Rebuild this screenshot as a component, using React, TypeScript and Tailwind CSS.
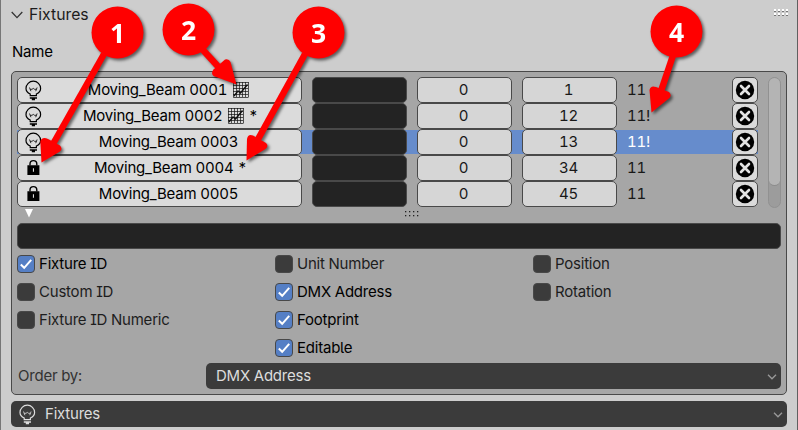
import React from "react";

const names = [
  { name: "Moving_Beam 0001", graph: true, star: false, locked: false, id: "1", fp: "11" },
  { name: "Moving_Beam 0002", graph: true, star: true, locked: false, id: "12", fp: "11!" },
  { name: "Moving_Beam 0003", graph: false, star: false, locked: false, id: "13", fp: "11!", selected: true },
  { name: "Moving_Beam 0004", graph: false, star: true, locked: true, id: "34", fp: "11" },
  { name: "Moving_Beam 0005", graph: false, star: false, locked: true, id: "45", fp: "11" },
];

const columns = [
  [
    { label: "Fixture ID", on: true },
    { label: "Custom ID", on: false },
    { label: "Fixture ID Numeric", on: false },
  ],
  [
    { label: "Unit Number", on: false },
    { label: "DMX Address", on: true },
    { label: "Footprint", on: true },
    { label: "Editable", on: true },
  ],
  [
    { label: "Position", on: false },
    { label: "Rotation", on: false },
  ],
];

function Bulb() {
  return (
    <svg width="18" height="22" viewBox="0 0 18 22" fill="none" stroke="currentColor" className="shrink-0">
      <path d="M5.2 16.6V15C2.500 13.800 1 12 1 9.500a7.300 7.300 0 0 1 14.600 0c0 2.500-1.500 4.300-4.200 5.500v1.600z" strokeWidth="1.2" />
      <path d="M4.500 8.500l1.400 3.700M5.200 10.300h1.800l1.300-.9 1.300.9h1.800M12.100 8.500l-1.400 3.700" strokeWidth="0.8" />
      <path d="M4.800 19h7.200M6.800 20.500h3.200" strokeWidth="1.5" />
    </svg>
  );
}

function Lock() {
  return (
    <svg width="18" height="22" viewBox="0 0 18 22" className="shrink-0">
      <path d="M5 8.500V7a3.400 3.400 0 0 1 6.800 0v1.500" fill="none" stroke="#000" strokeWidth="1.4" />
      <path fill="#000" fillRule="evenodd" d="M2.400 8.200h12v9.800h-12zM7.900 11.300v3.400h1.100v-3.400z" />
    </svg>
  );
}

function Graph() {
  return (
    <svg width="16" height="16" viewBox="0 0 16 16" fill="none" stroke="#111" className="ml-[6px] shrink-0">
      <path d="M.5 0v15.500H15.500M3.500 0v15M6.500 0v15M9.500 0v15M12.500 0v15M15.500 0v15M0 .5h15.500M0 3.500h15M0 6.500h15M0 9.500h15M0 12.500h15" strokeWidth=".7" />
      <path d="M1 14l4-5 2.500 2L14.500 2.500" strokeWidth="1.400" />
    </svg>
  );
}

function Chevron({ className }: { className: string }) {
  return (
    <svg width="10" height="6" viewBox="0 0 10 6" fill="none" stroke="currentColor" className={className}>
      <path d="M1 .8l4 4 4-4" strokeWidth="1.3" />
    </svg>
  );
}

function Callouts() {
  const items = [
    { n: "1", cx: 117.5, cy: 32.5, line: "M104 54L53 144", head: "M41.5 162.5L40.3 141Q42.5 136 48 139L60 145.5Q63 149 60 151.5Z" },
    { n: "2", cx: 188.5, cy: 29.5, line: "M203 50L224 73", head: "M236.500 84.500L213.500 76Q210.500 73 213.500 69.500L225 59.500Q229 58.500 230.500 62Z" },
    { n: "3", cx: 318.5, cy: 32.5, line: "M305 54L257 141", head: "M246.500 160.500L247 139Q248 133.500 253 135.500L266 143Q269 146 265.500 149Z" },
    { n: "4", cx: 676.5, cy: 31.5, line: "M673.500 54L660 94", head: "M651.500 112.500L649.500 90Q650.500 85 656 87L669 92Q672 95 669.500 98Z" },
  ];
  return (
    <svg width="798" height="430" className="pointer-events-none absolute -left-px top-0 [filter:drop-shadow(2px_2px_1.5px_rgba(0,0,0,0.55))]">
      {items.map((c) => (
        <g key={c.n} fill="#f00">
          <path d={c.line} stroke="#f00" strokeWidth="6.5" />
          <path d={c.head} />
          <circle cx={c.cx} cy={c.cy} r="26" />
          <text x={c.cx} y={c.cy + 10.5} textAnchor="middle" className="fill-white font-['Open_Sans',sans-serif] text-[26.5px] font-bold tracking-normal">{c.n}</text>
        </g>
      ))}
    </svg>
  );
}

const cell = "h-[26px] shrink-0 rounded-[5px] border border-[#494949] flex items-center";

export default function App() {
  return (
    <div className="relative h-[430px] w-[798px] overflow-hidden border-x border-l-[#777] border-r-[#606060] bg-[#cdcdcd] px-[10px] font-['Inter',sans-serif] text-[15px] leading-[20px] tracking-[-0.22px] text-black [font-feature-settings:'cv05','cv08','tnum']">
      <header className="flex h-[28px] items-center">
        <svg width="12" height="8" viewBox="0 0 12 8" fill="none" stroke="#333" className="mt-[2px]">
          <path d="M.7 1l5.300 5.600L11.300 1" strokeWidth="1.3" />
        </svg>
        <span className="ml-[6px] pt-[2px] text-[15.75px] tracking-normal text-[#1c1c1c]">Fixtures</span>
        <svg width="15" height="8" className="ml-auto mr-[-2px] mt-[-3px]">
          {[0, 4, 8, 12].map((x) => [0, 4].map((y) => (
            <g key={`${x}-${y}`}>
              <rect x={x} y={y + 1} width="2" height="2" fill="#777" />
              <rect x={x} y={y} width="2" height="2" fill="#fff" />
            </g>
          )))}
        </svg>
      </header>
      <div className="flex h-[43px] items-center pl-px pt-[5px]">Name</div>
      <section className="h-[324px] w-[776px] rounded-[5px] border border-[#494949] bg-[#a6a6a6] px-[5px] pt-[5px]">
        <div className="flex h-[130px]">
          <div className="w-[741px]">
            {names.map((r) => (
              <div key={r.name} className={`flex h-[26px] items-center ${r.selected ? "bg-[linear-gradient(#a6a6a6_1px,#668ccc_1px,#668ccc_25px,#a6a6a6_25px)]" : ""}`}>
                <div className={`${cell} w-[285px] bg-[#dbdbdb] pl-[7px]`}>
                  {r.locked ? <Lock /> : <Bulb />}
                  <div className="flex flex-1 items-center justify-center pr-[7px]">
                    <span className="whitespace-pre">{r.name}</span>
                    {r.graph && <Graph />}
                    {r.star && <span className="ml-[4px] mr-[-4px]">*</span>}
                  </div>
                </div>
                <div className={`${cell} ml-[10px] w-[95px] bg-[#232323]`} />
                <div className={`${cell} ml-[10px] w-[95px] justify-center bg-[#d6d6d6] pr-[2px] text-[#181818]`}>0</div>
                <div className={`${cell} ml-[10px] w-[95px] justify-center bg-[#d6d6d6] pr-[2px] text-[#181818]`}>{r.id}</div>
                <span className={`ml-[10px] ${r.selected ? "text-white" : "text-[#181818]"}`}>{r.fp}</span>
                <div className={`${cell} ml-auto w-[26px] justify-center bg-[#dbdbdb]`}>
                  <svg width="20" height="20" viewBox="0 0 20 20">
                    <circle cx="10" cy="10" r="9.200" fill="#000" />
                    <path d="M6 6l8 8m0-8l-8 8" stroke="#e2e2e2" strokeWidth="2.600" strokeLinecap="round" />
                  </svg>
                </div>
              </div>
            ))}
          </div>
          <div className="ml-[10px] h-[131px] w-[13px] rounded-full border border-[#919191] bg-[#9c9c9c]">
            <div className="h-[108px] rounded-full border-b border-[#8c8c8c] bg-[#b4b4b4]" />
          </div>
        </div>
        <div className="flex h-[16px] items-start">
          <svg width="8" height="10" className="ml-[8px] mt-[2px]"><path d="M0 0h8L4 8.500z" fill="#fff" /></svg>
          <svg width="14" height="6" className="ml-[372px] mt-[4px]" fill="#222">
            {[0, 4, 8, 12].map((x) => [0, 4].map((y) => <rect key={`${x}-${y}`} x={x} y={y} width="1.300" height="1.300" />))}
          </svg>
        </div>
        <div className="h-[26px] rounded-[5px] border border-[#494949] bg-[#232323]" />
        <div className="flex h-[114px] pt-[1px]">
          {columns.map((col, i) => (
            <div key={i} className="w-[258px] shrink-0 last:w-[248px]">
              {col.map((o) => (
                <div key={o.label} className={`flex h-[28px] items-center ${o.on ? "text-black" : "text-[#1d1d1d]"}`}>
                  <span className={`flex h-[18px] w-[18px] items-center justify-center rounded-[4px] border ${o.on ? "border-[#484848] bg-[#557fc5]" : "border-[#484848] bg-[#3b3b3b]"}`}>
                    {o.on && <svg width="12" height="12" viewBox="0 0 12 12" fill="none" stroke="#fff"><path d="M.8 6.500L4.200 9.800 11.200 1.800" strokeWidth="2" /></svg>}
                  </span>
                  <span className="ml-[4px]">{o.label}</span>
                </div>
              ))}
            </div>
          ))}
        </div>
        <div className="flex h-[26px] items-center">
          <span className="w-[189px] pl-px text-[#333]">Order by:</span>
          <div className="flex h-[26px] flex-1 items-center rounded-[5px] bg-[#3b3b3b] pl-[10px] text-[#ddd]">
            DMX Address
            <Chevron className="ml-auto mr-[4px] mt-[2px] text-[#999]" />
          </div>
        </div>
      </section>
      <div className="mt-[6px] flex h-[26px] w-[776px] items-center rounded-[5px] bg-[#3b3b3b] pl-[8px] text-[#ddd]">
        <Bulb />
        <span className="ml-[8px]">Fixtures</span>
        <Chevron className="ml-auto mr-[4px] mt-[2px] text-[#999]" />
      </div>
      <Callouts />
    </div>
  );
}
